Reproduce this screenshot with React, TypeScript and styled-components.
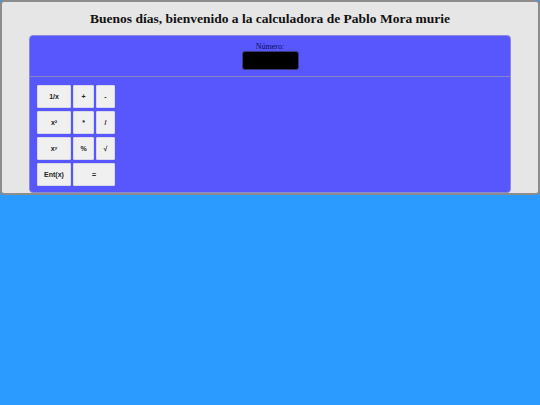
import React from "react";
import styled, { createGlobalStyle } from "styled-components";

const Global = createGlobalStyle`
  html, body { margin: 0; padding: 0; background: #2b9bff; }
  * { box-sizing: border-box; }
`;

const Frame = styled.div`
  background: #e6e6e6;
  border: 2px solid #8c8c8c;
  border-radius: 4px;
  height: 195px;
  padding: 0 27px;
  display: flex;
  flex-direction: column;
`;

const Title = styled.h1`
  margin: 8px 0 0;
  height: 25px;
  font-family: "Liberation Serif", serif;
  font-size: 13.5px;
  line-height: 17px;
  font-weight: bold;
  text-align: center;
  color: #111;
`;

const Panel = styled.div`
  background: #5757fd;
  border: 1px solid #8a8ad8;
  border-radius: 4px;
  height: 158px;
`;

const Display = styled.div`
  height: 41px;
  border-bottom: 1px solid #8585c8;
  display: flex;
  flex-direction: column;
  align-items: center;
  padding-top: 7px;
`;

const Label = styled.label`
  font-family: "Liberation Serif", serif;
  font-size: 8px;
  line-height: 7px;
  color: #0c0c55;
`;

const Screen = styled.div`
  width: 57px;
  height: 19px;
  margin-top: 1px;
  background: #000;
  border: 1px solid #3a3a7a;
  border-radius: 3px;
`;

const Keys = styled.div`
  display: grid;
  grid-template-columns: 34px 21px 19px;
  grid-auto-rows: 23px;
  gap: 3px 2px;
  padding: 8px 0 0 7px;
  width: max-content;
`;

const Key = styled.button<{ $span?: number }>`
  grid-column: span ${(p) => p.$span ?? 1};
  background: #f0f0f0;
  border: 1px solid #d8d8e8;
  border-radius: 1px;
  padding: 0;
  font-family: "Liberation Sans", Arial, sans-serif;
  font-size: 7px;
  font-weight: bold;
  color: #222;
`;

export default function App() {
  return (
    <>
      <Global />
      <Frame>
        <Title>Buenos días, bienvenido a la calculadora de Pablo Mora murie</Title>
        <Panel>
          <Display>
            <Label>Número:</Label>
            <Screen />
          </Display>
          <Keys>
            <Key>1/x</Key>
            <Key>+</Key>
            <Key>-</Key>
            <Key>x²</Key>
            <Key>*</Key>
            <Key>/</Key>
            <Key>xʸ</Key>
            <Key>%</Key>
            <Key>√</Key>
            <Key>Ent(x)</Key>
            <Key $span={2}>=</Key>
          </Keys>
        </Panel>
      </Frame>
    </>
  );
}
